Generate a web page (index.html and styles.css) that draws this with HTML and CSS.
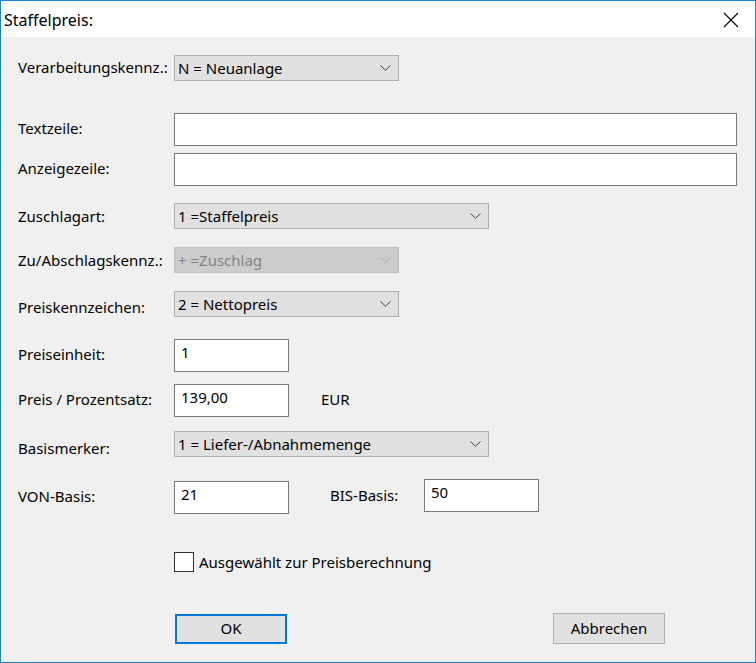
FILE: index.html
```html
<!DOCTYPE html>
<html lang="de">
<head>
<meta charset="utf-8">
<title>Staffelpreis</title>
<link rel="stylesheet" href="styles.css">
</head>
<body>
<div class="window">
  <div class="titlebar">
    <span class="title">Staffelpreis:</span>
    <svg class="close" width="16" height="16" viewBox="0 0 16 16"><path d="M1 1 L15 15 M15 1 L1 15" stroke="#000" stroke-width="1.1" fill="none"/></svg>
  </div>
  <div class="body">
    <div class="row sel r1">
      <span class="lbl up">Verarbeitungskennz.:</span>
      <div class="combo narrow"><span>N = Neuanlage</span><svg class="chev" width="11" height="6" viewBox="0 0 11 6"><path d="M0.5 0.5 L5.5 5.2 L10.5 0.5" stroke="#3c3c3c" fill="none"/></svg></div>
    </div>
    <div class="row inp r2">
      <span class="lbl up">Textzeile:</span>
      <input class="field full" type="text" value="">
    </div>
    <div class="row inp r3">
      <span class="lbl up">Anzeigezeile:</span>
      <input class="field full" type="text" value="">
    </div>
    <div class="row sel r4">
      <span class="lbl">Zuschlagart:</span>
      <div class="combo wide"><span>1 =Staffelpreis</span><svg class="chev" width="11" height="6" viewBox="0 0 11 6"><path d="M0.5 0.5 L5.5 5.2 L10.5 0.5" stroke="#3c3c3c" fill="none"/></svg></div>
    </div>
    <div class="row sel r5">
      <span class="lbl">Zu/Abschlagskennz.:</span>
      <div class="combo narrow disabled"><span>+ =Zuschlag</span><svg class="chev" width="11" height="6" viewBox="0 0 11 6"><path d="M0.5 0.5 L5.5 5.2 L10.5 0.5" stroke="#a6a6a6" fill="none"/></svg></div>
    </div>
    <div class="row sel r6">
      <span class="lbl down3">Preiskennzeichen:</span>
      <div class="combo narrow"><span>2 = Nettopreis</span><svg class="chev" width="11" height="6" viewBox="0 0 11 6"><path d="M0.5 0.5 L5.5 5.2 L10.5 0.5" stroke="#3c3c3c" fill="none"/></svg></div>
    </div>
    <div class="row inp r7">
      <span class="lbl up">Preiseinheit:</span>
      <input class="field small" type="text" value="1">
    </div>
    <div class="row inp r8">
      <span class="lbl up">Preis / Prozentsatz:</span>
      <input class="field small" type="text" value="139,00">
      <span class="unit">EUR</span>
    </div>
    <div class="row sel r9">
      <span class="lbl down4">Basismerker:</span>
      <div class="combo wide"><span>1 = Liefer-/Abnahmemenge</span><svg class="chev" width="11" height="6" viewBox="0 0 11 6"><path d="M0.5 0.5 L5.5 5.2 L10.5 0.5" stroke="#3c3c3c" fill="none"/></svg></div>
    </div>
    <div class="row r10">
      <span class="lbl von">VON-Basis:</span>
      <input class="field small von-field" type="text" value="21">
      <span class="bis-lbl">BIS-Basis:</span>
      <input class="field small bis-field" type="text" value="50">
    </div>
    <div class="row chk-row">
      <span class="box"></span>
      <span class="chk-lbl">Ausgewählt zur Preisberechnung</span>
    </div>
    <div class="row btn-row">
      <button class="btn default" type="button">OK</button>
      <button class="btn cancel" type="button">Abbrechen</button>
    </div>
  </div>
</div>
</body>
</html>
```
FILE: styles.css
```css
html, body {
  margin: 0;
  padding: 0;
  background: #f0f0f0;
}
body {
  font-family: "Noto Sans", "Open Sans", sans-serif;
  font-size: 15px;
  color: #000;
}
.window {
  width: 756px;
  height: 663px;
  box-sizing: border-box;
  border: 1px solid #1883d7;
  display: flex;
  flex-direction: column;
  background: #f0f0f0;
}
.titlebar {
  height: 36px;
  flex: none;
  background: #fff;
  display: flex;
  align-items: center;
  justify-content: space-between;
  padding: 0 16px 0 3px;
}
.title {
  font-size: 16px;
  padding-top: 2px;
}
.close {
  display: block;
  margin-top: 1px;
}
.body {
  flex: 1;
  padding-left: 17px;
  display: flex;
  flex-direction: column;
}
.row {
  display: flex;
  align-items: center;
  flex: none;
}
.row.sel { height: 26px; }
.row.inp { height: 33px; }
.r1 { margin-top: 18px; }
.r2 { margin-top: 32px; }
.r3 { margin-top: 7px; }
.r4 { margin-top: 17px; }
.r5 { margin-top: 18px; }
.r6 { margin-top: 18px; }
.r7 { margin-top: 22px; }
.r8 { margin-top: 12px; }
.r9 { margin-top: 14px; }
.r10 {
  margin-top: 22px;
  height: 35px;
  align-items: flex-start;
}
.lbl {
  width: 156px;
  flex: none;
  white-space: nowrap;
}
.lbl.up { padding-bottom: 3px; }
.down3 { padding-top: 6px; }
.down4 { padding-top: 8px; }
.combo {
  height: 26px;
  box-sizing: border-box;
  background: #e1e1e1;
  border: 1px solid #adadad;
  display: flex;
  align-items: center;
  justify-content: space-between;
  padding: 0 7px 0 3px;
  white-space: nowrap;
}
.combo.narrow { width: 225px; }
.combo.wide { width: 315px; }
.combo.disabled {
  background: #cccccc;
  border-color: #bfbfbf;
  color: #838383;
}
.chev { display: block; }
.field {
  height: 33px;
  box-sizing: border-box;
  border: 1px solid #7a7a7a;
  background: #fff;
  font: inherit;
  color: #000;
  padding: 0 0 8px 6px;
  margin: 0;
  outline: none;
  border-radius: 0;
}
.field.full { width: 563px; }
.field.small { width: 115px; }
.unit {
  margin-left: 32px;
  padding-bottom: 3px;
}
.lbl.von {
  align-self: flex-end;
  height: 33px;
  display: flex;
  align-items: center;
  padding-bottom: 3px;
  box-sizing: border-box;
}
.von-field { align-self: flex-end; }
.bis-lbl {
  width: 94px;
  margin-left: 41px;
  flex: none;
  height: 33px;
  display: flex;
  align-items: center;
  padding-bottom: 1px;
  box-sizing: border-box;
}
.bis-field { align-self: flex-start; }
.chk-row {
  margin-top: 38px;
  height: 20px;
  padding-left: 156px;
}
.box {
  width: 20px;
  height: 20px;
  box-sizing: border-box;
  border: 1px solid #333;
  background: #fff;
  flex: none;
}
.chk-lbl {
  margin-left: 5px;
  padding-bottom: 1px;
}
.btn-row {
  margin-top: 41px;
  height: 31px;
  padding-left: 157px;
  align-items: flex-start;
}
.btn {
  width: 112px;
  box-sizing: border-box;
  background: #e1e1e1;
  font: inherit;
  color: #000;
  margin: 0;
  padding: 0 0 2px 0;
  border-radius: 0;
}
.btn.default {
  height: 30px;
  margin-top: 1px;
  border: 2px solid #0078d7;
}
.btn.cancel {
  height: 31px;
  border: 1px solid #adadad;
  margin-left: 266px;
}
```
